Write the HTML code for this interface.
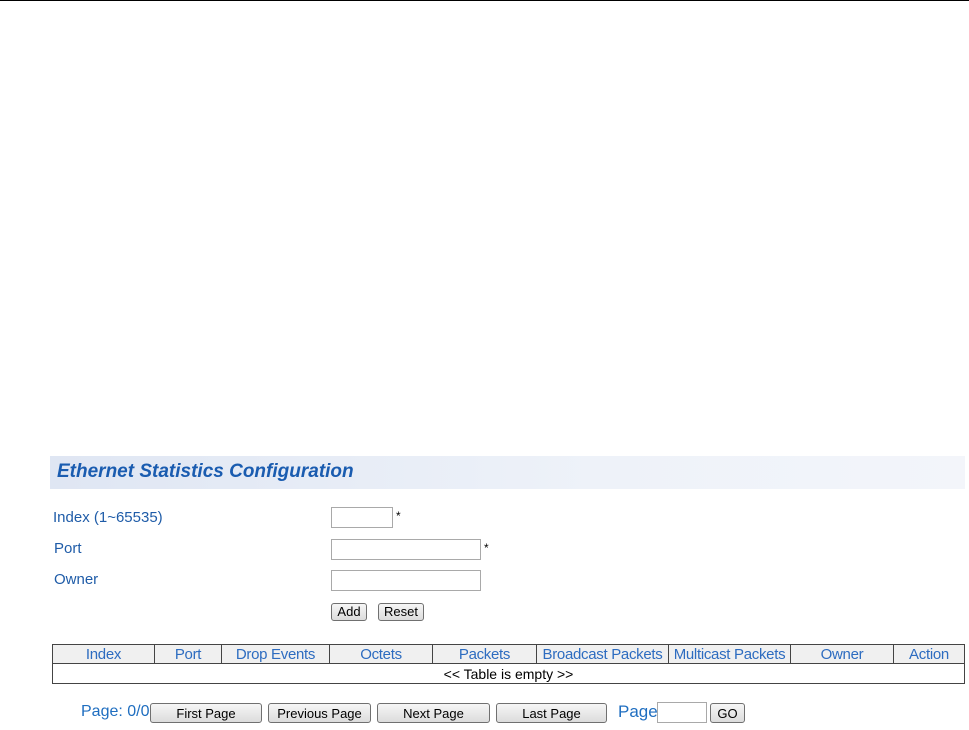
<!DOCTYPE html>
<html><head><style>
body{margin:0;width:969px;height:730px;background:#fff;font-family:"Liberation Sans",Arial,sans-serif;position:relative;overflow:hidden}
.a{position:absolute}
.lbl{color:#1f5ca8;font-size:15px}
.inp{position:absolute;border:1px solid #a9a9a9;background:#fff;box-sizing:border-box}
.btn{position:absolute;box-sizing:border-box;border:1px solid #707070;border-radius:3px;background:linear-gradient(#f6f6f6,#dcdcdc);font-size:13px;color:#000;text-align:center}
table{position:absolute;left:52px;top:644px;width:913px;border-collapse:collapse;font-size:15px;letter-spacing:-0.3px}
td{border:1px solid #444;padding:0;text-align:center;white-space:nowrap}
tr.h td{background:#f0f0f0;color:#2d6cc0;height:18px}
tr.b td{height:19px;font-size:14px;color:#000;letter-spacing:0}
</style></head><body>
<div class="a" style="left:0;top:0;width:969px;height:1px;background:#000"></div>
<div class="a" style="left:50px;top:456px;width:915px;height:33px;background:linear-gradient(90deg,#dfe6f3,#eef2f9 60%,#f3f5fa)"></div>
<div class="a" style="left:57px;top:461px;font-size:19px;font-weight:bold;font-style:italic;color:#1a5cb0">Ethernet Statistics Configuration</div>
<div class="a lbl" style="left:53px;top:509px">Index (1~65535)</div>
<div class="a lbl" style="left:54px;top:540px">Port</div>
<div class="a lbl" style="left:54px;top:571px">Owner</div>
<div class="inp" style="left:331px;top:507px;width:62px;height:21px"></div>
<div class="a" style="left:396px;top:509px;font-size:12px">*</div>
<div class="inp" style="left:331px;top:539px;width:150px;height:21px"></div>
<div class="a" style="left:484px;top:541px;font-size:12px">*</div>
<div class="inp" style="left:331px;top:570px;width:150px;height:21px"></div>
<div class="btn" style="left:331px;top:603px;width:36px;height:18px;line-height:16px">Add</div>
<div class="btn" style="left:378px;top:603px;width:46px;height:18px;line-height:16px">Reset</div>
<table>
<tr class="h"><td style="width:101px">Index</td><td style="width:66px">Port</td><td style="width:107px">Drop Events</td><td style="width:102px">Octets</td><td style="width:103px">Packets</td><td style="width:131px">Broadcast Packets</td><td style="width:121px">Multicast Packets</td><td style="width:102px">Owner</td><td>Action</td></tr>
<tr class="b"><td colspan="9">&lt;&lt; Table is empty &gt;&gt;</td></tr>
</table>
<div class="a" style="left:81px;top:703px;font-size:16px;color:#1f6ec0">Page: 0/0</div>
<div class="btn" style="left:150px;top:703px;width:112px;height:20px;line-height:19px">First Page</div>
<div class="btn" style="left:268px;top:703px;width:103px;height:20px;line-height:19px">Previous Page</div>
<div class="btn" style="left:377px;top:703px;width:113px;height:20px;line-height:19px">Next Page</div>
<div class="btn" style="left:496px;top:703px;width:111px;height:20px;line-height:19px">Last Page</div>
<div class="a" style="left:618px;top:702px;font-size:17px;color:#1f6ec0">Page</div>
<div class="inp" style="left:657px;top:702px;width:50px;height:21px"></div>
<div class="btn" style="left:710px;top:703px;width:35px;height:20px;line-height:19px">GO</div>
</body></html>
